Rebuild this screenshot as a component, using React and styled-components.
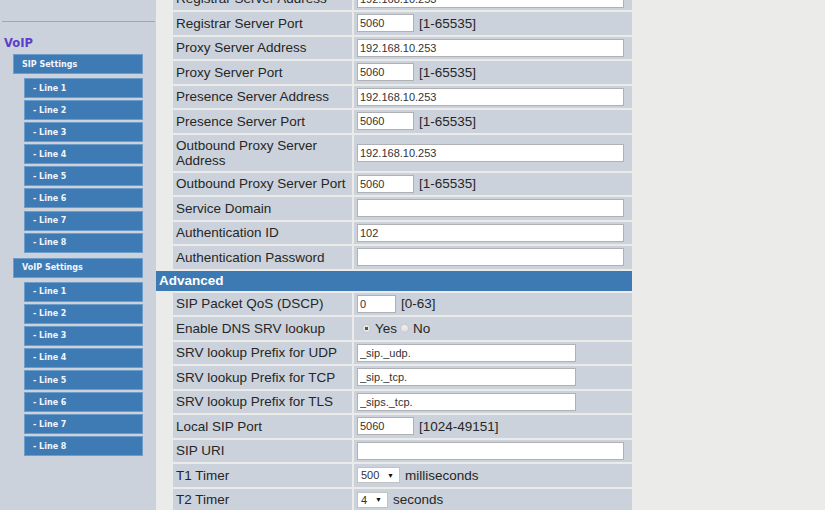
import React from 'react';
import styled, { createGlobalStyle } from 'styled-components';

const GlobalStyle = createGlobalStyle`
  html, body {
    margin: 0;
    padding: 0;
    height: 100%;
    overflow: hidden;
  }
  body {
    background: #ebebe9;
    font-family: "Liberation Sans", Arial, sans-serif;
  }
`;

const Page = styled.div`
  display: flex;
  align-items: flex-start;
  min-height: 100vh;
`;

const Sidebar = styled.nav`
  width: 156px;
  flex-shrink: 0;
  align-self: stretch;
  background: #cbd2db;
  padding-top: 21px;
  box-sizing: border-box;
`;

const Rule = styled.hr`
  margin: 0 1px 0 2px;
  border: 0;
  border-top: 1px solid #a2a7ad;
`;

const SectionTitle = styled.div`
  margin: 14px 0 0 4px;
  font-family: "DejaVu Sans", Verdana, sans-serif;
  font-weight: bold;
  font-size: 11.5px;
  line-height: 14px;
  color: #5b3ecb;
`;

const NavGroup = styled.div`
  display: flex;
  flex-direction: column;
  margin-top: 4px;

  & + & {
    margin-top: 5px;
  }
`;

const SubList = styled.div`
  display: flex;
  flex-direction: column;
  gap: 2.1px;
  margin-top: 4px;
`;

const NavButton = styled.div`
  height: 20px;
  box-sizing: border-box;
  margin: ${({ $sub }) => ($sub ? '0 13px 0 24px' : '0 13px')};
  padding-left: 8px;
  display: flex;
  align-items: center;
  background: #3e7bb5;
  border: 1px solid #6e9dc9;
  color: #f2f6fb;
  font-family: "DejaVu Sans", Verdana, sans-serif;
  font-weight: bold;
  font-size: 8px;
`;

const Form = styled.div`
  width: 476px;
  margin-top: -12.5px;
  display: flex;
  flex-direction: column;
  gap: 2px;
`;

const Row = styled.div`
  display: grid;
  grid-template-columns: 15px 179px 278px;
  column-gap: 2px;
  height: ${({ $tall }) => ($tall ? '36px' : '22.5px')};
`;

const Label = styled.div`
  grid-column: 2;
  background: #cbd2db;
  padding: 0 3px;
  display: flex;
  align-items: center;
  font-size: 13.5px;
  line-height: 15px;
  color: #262626;
`;

const Value = styled.div`
  background: #cbd2db;
  padding: 0 3px;
  display: flex;
  align-items: center;
  gap: 5px;
  font-size: 13.5px;
  color: #262626;
`;

const SectionHeader = styled.div`
  height: 20px;
  background: #3d7ab4;
  color: #fff;
  font-weight: bold;
  font-size: 13.5px;
  padding-left: 3px;
  display: flex;
  align-items: center;
`;

const TextInput = styled.input`
  width: ${({ $w }) => $w}px;
  height: 18px;
  box-sizing: border-box;
  margin: 0;
  padding: 0 2px;
  border: 1px solid #afb1b5;
  background: #fff;
  font-family: "Liberation Sans", Arial, sans-serif;
  font-size: 11px;
  color: #333;
  outline: none;
`;

const RadioGroup = styled.div`
  display: flex;
  align-items: center;
  margin-left: 5px;
`;

const Radio = styled.span`
  width: 9px;
  height: 9px;
  box-sizing: border-box;
  border-radius: 50%;
  border: 1px solid #c9c9c9;
  background: ${({ $checked }) =>
    $checked
      ? 'radial-gradient(circle, #555 0 1.5px, #e6e6e6 2px)'
      : 'linear-gradient(#f4f4f4, #dcdcdc)'};
  margin-right: 4px;
`;

const RadioText = styled.span`
  margin-right: 3px;
`;

const SelectBox = styled.div`
  width: ${({ $w }) => $w}px;
  height: 16px;
  box-sizing: border-box;
  border: 1px solid #c3c3c3;
  background: #fff;
  display: flex;
  align-items: center;
  justify-content: space-between;
  padding: 0 5px 0 3px;
  font-size: 11px;
  color: #333;
`;

const Arrow = styled.span`
  font-size: 7px;
  color: #111;
`;

const wide = 267;

const rowsTop = [
  { label: 'Registrar Server Address', input: '192.168.10.253', w: wide },
  { label: 'Registrar Server Port', input: '5060', w: 57, note: '[1-65535]' },
  { label: 'Proxy Server Address', input: '192.168.10.253', w: wide },
  { label: 'Proxy Server Port', input: '5060', w: 57, note: '[1-65535]' },
  { label: 'Presence Server Address', input: '192.168.10.253', w: wide },
  { label: 'Presence Server Port', input: '5060', w: 57, note: '[1-65535]' },
  { label: 'Outbound Proxy Server Address', input: '192.168.10.253', w: wide, tall: true },
  { label: 'Outbound Proxy Server Port', input: '5060', w: 57, note: '[1-65535]' },
  { label: 'Service Domain', input: '', w: wide },
  { label: 'Authentication ID', input: '102', w: wide },
  { label: 'Authentication Password', input: '', w: wide },
];

const rowsAdvanced = [
  { label: 'SIP Packet QoS (DSCP)', input: '0', w: 39, note: '[0-63]' },
  { label: 'Enable DNS SRV lookup', radio: true },
  { label: 'SRV lookup Prefix for UDP', input: '_sip._udp.', w: 219 },
  { label: 'SRV lookup Prefix for TCP', input: '_sip._tcp.', w: 219 },
  { label: 'SRV lookup Prefix for TLS', input: '_sips._tcp.', w: 219 },
  { label: 'Local SIP Port', input: '5060', w: 57, note: '[1024-49151]' },
  { label: 'SIP URI', input: '', w: wide },
  { label: 'T1 Timer', select: '500', w: 43, note: 'milliseconds' },
  { label: 'T2 Timer', select: '4', w: 31, note: 'seconds' },
];

const lines = ['1', '2', '3', '4', '5', '6', '7', '8'];
const groups = ['SIP Settings', 'VoIP Settings'];

const FieldValue = ({ row }) => {
  if (row.radio) {
    return (
      <Value>
        <RadioGroup>
          <Radio $checked />
          <RadioText>Yes</RadioText>
          <Radio />
          <RadioText>No</RadioText>
        </RadioGroup>
      </Value>
    );
  }
  return (
    <Value>
      {row.select ? (
        <SelectBox $w={row.w}>
          {row.select}
          <Arrow>▼</Arrow>
        </SelectBox>
      ) : (
        <TextInput $w={row.w} defaultValue={row.input} readOnly />
      )}
      {row.note && <span>{row.note}</span>}
    </Value>
  );
};

const FieldRow = ({ row }) => (
  <Row $tall={row.tall}>
    <Label>{row.label}</Label>
    <FieldValue row={row} />
  </Row>
);

const App = () => (
  <Page>
    <GlobalStyle />
    <Sidebar>
      <Rule />
      <SectionTitle>VoIP</SectionTitle>
      {groups.map((g) => (
        <NavGroup key={g}>
          <NavButton>{g}</NavButton>
          <SubList>
            {lines.map((n) => (
              <NavButton $sub key={n}>- Line {n}</NavButton>
            ))}
          </SubList>
        </NavGroup>
      ))}
    </Sidebar>
    <Form>
      {rowsTop.map((row) => (
        <FieldRow row={row} key={row.label} />
      ))}
      <SectionHeader>Advanced</SectionHeader>
      {rowsAdvanced.map((row) => (
        <FieldRow row={row} key={row.label} />
      ))}
    </Form>
  </Page>
);

export default App;
